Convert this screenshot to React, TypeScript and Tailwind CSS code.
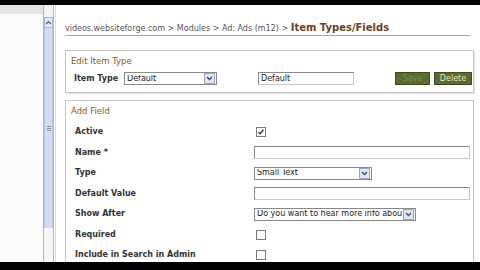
import React from 'react';

const font = { fontFamily: '"DejaVu Sans", Verdana, sans-serif' };

function Check({ checked }: { checked?: boolean }) {
  return (
    <div className="w-[10px] h-[10px] border border-[#7a7a7a] bg-white flex items-center justify-center">
      {checked && (
        <svg width="8" height="8" viewBox="0 0 8 8">
          <path d="M1.5 4 L3.2 5.8 L6.5 1.8" fill="none" stroke="#2b3a6b" strokeWidth="1.4" />
        </svg>
      )}
    </div>
  );
}

function DropBtn() {
  return (
    <div className="w-[11px] h-[11px] shrink-0 border border-[#9aa6c4] bg-[#dfe6f5] flex items-center justify-center">
      <svg width="7" height="5" viewBox="0 0 7 5">
        <path d="M1 1 L3.5 3.5 L6 1" fill="none" stroke="#3a4a7a" strokeWidth="1.3" />
      </svg>
    </div>
  );
}

function Select({ value, width }: { value: string; width: string }) {
  return (
    <div className={`${width} h-[13px] shrink-0 border border-[#8a8a8a] bg-white flex items-center pl-[2px] pr-[1px]`}>
      <span className="flex-1 min-w-0 overflow-hidden whitespace-nowrap text-[8px] text-[#222] leading-none">{value}</span>
      <DropBtn />
    </div>
  );
}

function TextInput({ value, width }: { value?: string; width: string }) {
  return (
    <div className={`${width} h-[13px] shrink-0 border border-[#8a8a8a] border-r-[#c8c8c8] border-b-[#c8c8c8] bg-white flex items-center pl-[2px]`}>
      <span className="text-[8px] text-[#222] leading-none">{value}</span>
    </div>
  );
}

const rows: { label: string; control: React.ReactNode }[] = [
  { label: 'Active', control: <div className="pl-[2px]"><Check checked /></div> },
  { label: 'Name *', control: <TextInput width="w-[216px]" /> },
  { label: 'Type', control: <Select value="Small Text" width="w-[118px]" /> },
  { label: 'Default Value', control: <TextInput width="w-[216px]" /> },
  { label: 'Show After', control: <Select value="Do you want to hear more info abou" width="w-[162px]" /> },
  { label: 'Required', control: <div className="pl-[2px]"><Check /></div> },
  { label: 'Include in Search in Admin', control: <div className="pl-[2px]"><Check /></div> },
];

export default function App() {
  return (
    <div className="w-[480px] h-[270px] flex flex-col bg-white overflow-hidden" style={font}>
      <div className="h-[5px] shrink-0 bg-black" />
      <div className="flex-1 flex min-h-0">
        {/* left pane */}
        <div className="w-[43px] shrink-0 flex flex-col bg-[#fbfbfb]">
          <div className="h-[9px] bg-[#e4e4e4]" />
        </div>
        {/* scrollbar */}
        <div className="w-[11px] shrink-0 flex flex-col border-x border-[#b8b8b8] bg-[#f4f4f4]">
          <div className="h-[12px]" />
          <div className="h-[11px] bg-[#e3e9f7] border border-[#aab6d3] flex items-center justify-center">
            <svg width="7" height="5" viewBox="0 0 7 5">
              <path d="M1 4 L3.5 1.5 L6 4" fill="none" stroke="#4a5a8a" strokeWidth="1.2" />
            </svg>
          </div>
          <div className="h-[200px] bg-[#d3dcf1] border-x border-[#b5c1de] flex items-center justify-center">
            <div className="flex flex-col gap-[1px]">
              <div className="w-[4px] h-px bg-[#8090b8]" />
              <div className="w-[4px] h-px bg-[#8090b8]" />
              <div className="w-[4px] h-px bg-[#8090b8]" />
            </div>
          </div>
          <div className="flex-1 bg-[#f7f7f7]" />
        </div>
        <div className="w-[2px] shrink-0 border-r border-[#dcdcdc]" />
        {/* main */}
        <div className="flex-1 min-w-0 pl-[9px] pr-[6px] flex flex-col">
          <div className="h-[31px] shrink-0 mr-[4px] border-b border-[#a8a8a8] flex items-end whitespace-nowrap overflow-hidden">
            <span className="text-[8px] text-[#555]">videos.websiteforge.com &gt; Modules &gt; Ad: Ads (m12) &gt;&nbsp;</span>
            <span className="text-[10px] font-bold text-[#6b4422] leading-none pb-[2px]" style={{ fontFamily: 'Tahoma, "DejaVu Sans", sans-serif' }}>Item Types/Fields</span>
          </div>

          <div className="mt-[14px] h-[43px] shrink-0 border border-[#c4c4c4] shadow-[1px_1px_1px_#e4e4e4] flex flex-col pl-[5px] pr-[1px]">
            <div className="h-[15px] flex items-end text-[8.5px] text-[#8a5a20] leading-none pb-[1px]">Edit Item Type</div>
            <div className="flex items-center mt-[6px]">
              <span className="text-[8px] font-bold text-[#333] ml-[3px] w-[50px]">Item Type</span>
              <Select value="Default" width="w-[93px]" />
              <div className="w-[41px]" />
              <TextInput value="Default" width="w-[96px]" />
              <div className="flex-1" />
              <div className="w-[35px] h-[13px] bg-[#5b6a2f] border border-[#3f4a1e] flex items-center justify-center text-[8px] text-[#7d8c52]">Save</div>
              <div className="w-[4px]" />
              <div className="w-[38px] h-[13px] bg-[#5b6a2f] border border-[#3f4a1e] flex items-center justify-center text-[8px] text-[#dfe6c8]">Delete</div>
            </div>
          </div>

          <div className="mt-[7px] flex-1 border border-b-0 border-[#c4c4c4] flex flex-col px-[5px]">
            <div className="h-[15px] flex items-end text-[8.5px] text-[#8a5a20] leading-none pb-[1px]">Add Field</div>
            <div className="flex flex-col mt-[6px]">
              {rows.map((r) => (
                <div key={r.label} className="h-[20.5px] flex items-center">
                  <span className="w-[183px] shrink-0 pl-[4px] text-[8px] font-bold text-[#333] whitespace-nowrap">{r.label}</span>
                  {r.control}
                </div>
              ))}
            </div>
          </div>
        </div>
      </div>
      <div className="h-[8px] shrink-0 bg-black" />
    </div>
  );
}
